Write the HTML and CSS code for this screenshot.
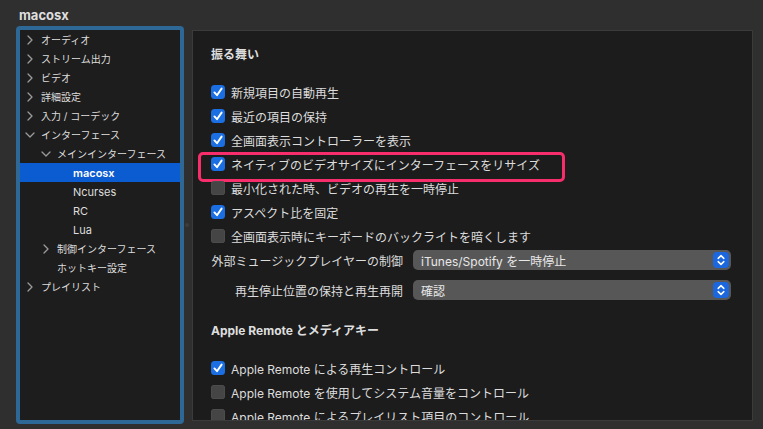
FILE: index.html
```html
<!DOCTYPE html>
<html lang="ja">
<head>
    <meta charset="UTF-8">
    <title>macosx</title>
    <link rel="stylesheet" href="styles.css">
</head>
<body>
    <svg class="defs" width="0" height="0">
        <symbol id="chev-right" viewBox="0 0 6 10">
            <path d="M1 1 L5 5 L1 9" fill="none" stroke="#9b9b9b" stroke-width="1.3" stroke-linecap="round" stroke-linejoin="round"/>
        </symbol>
        <symbol id="chev-down" viewBox="0 0 10 6">
            <path d="M1 1 L5 5 L9 1" fill="none" stroke="#9b9b9b" stroke-width="1.3" stroke-linecap="round" stroke-linejoin="round"/>
        </symbol>
        <symbol id="tick" viewBox="0 0 14 14">
            <path d="M3.4 7.4 L6 10.2 L10.6 3.6" fill="none" stroke="#fff" stroke-width="1.9" stroke-linecap="round" stroke-linejoin="round"/>
        </symbol>
        <symbol id="updown" viewBox="0 0 16 16">
            <path d="M5.2 6.4 L8 3.6 L10.8 6.4 M5.2 9.6 L8 12.4 L10.8 9.6" fill="none" stroke="#fff" stroke-width="1.5" stroke-linecap="round" stroke-linejoin="round"/>
        </symbol>
    </svg>

    <div class="title">macosx</div>

    <div class="main">
        <!-- preference tree -->
        <nav class="sidebar">
            <ul class="tree">
                <li class="row lvl1"><span class="chev"><svg class="ic-right"><use href="#chev-right"/></svg></span>オーディオ</li>
                <li class="row lvl1"><span class="chev"><svg class="ic-right"><use href="#chev-right"/></svg></span>ストリーム出力</li>
                <li class="row lvl1"><span class="chev"><svg class="ic-right"><use href="#chev-right"/></svg></span>ビデオ</li>
                <li class="row lvl1"><span class="chev"><svg class="ic-right"><use href="#chev-right"/></svg></span>詳細設定</li>
                <li class="row lvl1"><span class="chev"><svg class="ic-right"><use href="#chev-right"/></svg></span>入力 / コーデック</li>
                <li class="row lvl1"><span class="chev"><svg class="ic-down"><use href="#chev-down"/></svg></span>インターフェース</li>
                <li class="row lvl2"><span class="chev"><svg class="ic-down"><use href="#chev-down"/></svg></span>メインインターフェース</li>
                <li class="row lvl3 latin selected"><span class="chev"></span>macosx</li>
                <li class="row lvl3 latin"><span class="chev"></span>Ncurses</li>
                <li class="row lvl3 latin"><span class="chev"></span>RC</li>
                <li class="row lvl3 latin"><span class="chev"></span>Lua</li>
                <li class="row lvl2"><span class="chev"><svg class="ic-right"><use href="#chev-right"/></svg></span>制御インターフェース</li>
                <li class="row lvl2"><span class="chev"></span>ホットキー設定</li>
                <li class="row lvl1"><span class="chev"><svg class="ic-right"><use href="#chev-right"/></svg></span>プレイリスト</li>
            </ul>
        </nav>

        <div class="divider"><span class="grip"></span></div>

        <section class="panel">
            <h3 class="section-title">振る舞い</h3>
            <div class="checklist">
                <label class="check"><span class="box on"><svg><use href="#tick"/></svg></span>新規項目の自動再生</label>
                <label class="check"><span class="box on"><svg><use href="#tick"/></svg></span>最近の項目の保持</label>
                <label class="check"><span class="box on"><svg><use href="#tick"/></svg></span>全画面表示コントローラーを表示</label>
                <label class="check marked"><span class="box on"><svg><use href="#tick"/></svg></span>ネイティブのビデオサイズにインターフェースをリサイズ</label>
                <label class="check"><span class="box"></span>最小化された時、ビデオの再生を一時停止</label>
                <label class="check"><span class="box on"><svg><use href="#tick"/></svg></span>アスペクト比を固定</label>
                <label class="check"><span class="box"></span>全画面表示時にキーボードのバックライトを暗くします</label>
            </div>

            <div class="field">
                <span class="field-label">外部ミュージックプレイヤーの制御</span>
                <div class="popup"><span>iTunes/Spotify を一時停止</span><span class="stepper"><svg><use href="#updown"/></svg></span></div>
            </div>
            <div class="field">
                <span class="field-label">再生停止位置の保持と再生再開</span>
                <div class="popup"><span>確認</span><span class="stepper"><svg><use href="#updown"/></svg></span></div>
            </div>

            <h3 class="section-title second">Apple Remote とメディアキー</h3>
            <div class="checklist">
                <label class="check"><span class="box on"><svg><use href="#tick"/></svg></span>Apple Remote による再生コントロール</label>
                <label class="check"><span class="box"></span>Apple Remote を使用してシステム音量をコントロール</label>
                <label class="check"><span class="box"></span>Apple Remote によるプレイリスト項目のコントロール</label>
            </div>
        </section>
    </div>
</body>
</html>
```

FILE: styles.css
```css
* {
    margin: 0;
    padding: 0;
    box-sizing: border-box;
}

body {
    background: #2f2f2f;
    color: #dcdcdc;
    font-family: "Inter", "Noto Sans CJK JP", sans-serif;
    width: 763px;
    height: 429px;
    overflow: hidden;
}

.defs {
    position: absolute;
}

.title {
    height: 26px;
    padding: 6px 0 0 19px;
    font-size: 13px;
    font-weight: 700;
    line-height: 18px;
    color: #dedede;
}

.main {
    display: flex;
    align-items: flex-start;
    padding-left: 16px;
}

/* Sidebar tree */
.sidebar {
    width: 168px;
    height: 398px;
    border: 4px solid #2d6896;
    border-radius: 4px;
    background: #1d1d1d;
}

.tree {
    list-style: none;
}

.row {
    height: 19px;
    display: flex;
    align-items: center;
    font-size: 10px;
    color: #dddddd;
    white-space: nowrap;
}

.row.latin {
    font-size: 11px;
}

.lvl1 { padding-left: 3px; }
.lvl2 { padding-left: 19px; }
.lvl3 { padding-left: 35px; }

.chev {
    width: 13px;
    height: 19px;
    margin-right: 5px;
    display: flex;
    align-items: center;
    justify-content: center;
}

.ic-right {
    width: 6px;
    height: 10px;
}

.ic-down {
    width: 10px;
    height: 6px;
}

.row.selected {
    background: #0b5bd1;
    color: #fff;
    font-weight: 600;
}

.divider {
    width: 8px;
    height: 398px;
    display: flex;
    align-items: center;
    justify-content: center;
}

.grip {
    width: 4px;
    height: 4px;
    border-radius: 50%;
    background: #3d3d3d;
    margin-right: 3px;
}

/* Right panel */
.panel {
    width: 561px;
    height: 391px;
    margin-top: 4px;
    border: 1px solid #3b3b3b;
    background: #1c1c1c;
    overflow: hidden;
    padding: 15px 0 0 18px;
}

.section-title {
    height: 18px;
    line-height: 18px;
    font-size: 12px;
    font-weight: 700;
    color: #dedede;
}

.section-title.second {
    margin-top: 20px;
}

.checklist {
    margin-top: 16px;
}

.check {
    height: 24px;
    display: flex;
    align-items: center;
    gap: 6px;
    font-size: 12px;
    white-space: nowrap;
    position: relative;
}

.box {
    width: 14px;
    height: 14px;
    border-radius: 3.5px;
    background: #454545;
    box-shadow: inset 0 0 0 0.5px #555;
    flex-shrink: 0;
}

.box.on {
    background: #1b6fe3;
    box-shadow: none;
}

.box svg {
    width: 14px;
    height: 14px;
    display: block;
}

/* annotation frame around one row */
.check.marked::after {
    content: "";
    position: absolute;
    left: -13px;
    top: 0;
    width: 361px;
    height: 24px;
    border: 3px solid #f72d6c;
    border-radius: 5px;
}

.field {
    height: 24px;
    display: grid;
    grid-template-columns: 192px 318px;
    column-gap: 10px;
    align-items: center;
    font-size: 12px;
}

.field + .field {
    margin-top: 6px;
}

.field-label {
    text-align: right;
    white-space: nowrap;
}

.popup {
    height: 20px;
    border-radius: 5px;
    background: #575757;
    display: flex;
    align-items: center;
    justify-content: space-between;
    padding: 0 2px 0 8px;
    color: #e8e8e8;
}

.stepper {
    width: 16px;
    height: 16px;
    border-radius: 4px;
    background: #1c67dd;
}

.stepper svg {
    width: 16px;
    height: 16px;
    display: block;
}
```
